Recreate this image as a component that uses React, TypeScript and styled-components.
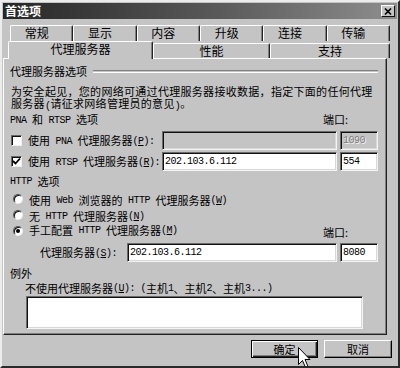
import React from 'react';
import styled, { createGlobalStyle } from 'styled-components';

const BG = '#c4c4c4';

const GlobalStyle = createGlobalStyle`
  html, body {
    margin: 0;
    padding: 0;
    background: ${BG};
  }
  body {
    font-family: "Noto Sans CJK SC", sans-serif;
    font-size: 11px;
    color: #000;
  }
`;

const Dialog = styled.div`
  position: relative;
  width: 400px;
  height: 368px;
  box-sizing: border-box;
  background: ${BG};
  border-top: 2px solid #ececec;
  border-left: 2px solid #ececec;
  border-right: 2px solid #2a2a2a;
  border-bottom: 2px solid #2a2a2a;
  padding: 1px;
  display: flex;
  flex-direction: column;
  overflow: hidden;
  font-family: "Noto Sans CJK SC", sans-serif;
  font-size: 11px;
  line-height: 1;
`;

const TitleBar = styled.div`
  height: 16px;
  display: flex;
  align-items: center;
  justify-content: space-between;
  padding: 0 2px 0 2px;
  background: linear-gradient(to right, #262626, #5a5a5a 55%, #8e8e8e);
`;

const Title = styled.span`
  color: #fff;
  font-size: 12px;
  font-weight: 700;
  line-height: 16px;
`;

const CloseButton = styled.div`
  width: 14px;
  height: 12px;
  box-sizing: border-box;
  background: ${BG};
  border-top: 1px solid #fff;
  border-left: 1px solid #fff;
  border-right: 1px solid #111;
  border-bottom: 1px solid #111;
  display: flex;
  align-items: center;
  justify-content: center;
`;

const TabStrip = styled.div`
  margin: 6px 0 0 5px;
  display: flex;
  flex-direction: column;
`;

const TabRow = styled.div<{ $indent: number }>`
  display: flex;
  align-items: flex-start;
  height: ${p => (p.$indent ? 16 : 17)}px;
  padding-left: ${p => p.$indent}px;
  width: 382px;
  box-sizing: border-box;
`;

const Tab = styled.div<{ $w?: number; $active?: boolean; $shift?: number }>`
  ${p => (p.$w ? `width: ${p.$w}px;` : 'flex: 1;')}
  box-sizing: border-box;
  height: ${p => (p.$active ? 18 : p.$shift ? 15 : 16)}px;
  margin-top: ${p => (p.$active ? 0 : p.$shift ?? 0)}px;
  padding-right: ${p => (p.$w ? 0 : 10)}px;
  background: ${BG};
  border-top: 1px solid #fff;
  border-left: 1px solid #fff;
  border-right: 1px solid #222;
  box-shadow: inset -1px 0 0 #808080;
  border-radius: 2px 2px 0 0;
  display: flex;
  justify-content: center;
  line-height: 14px;
  font-size: 12px;
  position: ${p => (p.$active ? 'relative' : 'static')};
  z-index: ${p => (p.$active ? 1 : 0)};
`;

const Panel = styled.div`
  width: 384px;
  height: 277px;
  box-sizing: border-box;
  border-top: 1px solid #fff;
  border-left: 1px solid #fff;
  border-right: 1px solid #222;
  border-bottom: 1px solid #222;
  box-shadow: inset -1px -1px 0 #808080;
  padding: 5px 8px 0 6px;
  display: flex;
  flex-direction: column;
`;

const GroupHeader = styled.div`
  height: 14px;
  display: flex;
  align-items: center;
  gap: 6px;
  line-height: 14px;
`;

const Etch = styled.div`
  flex: 1;
  height: 1px;
  border-top: 1px solid #808080;
  border-bottom: 1px solid #fff;
`;

const Description = styled.p`
  margin: 7px 0 0 1px;
  line-height: 12px;
  letter-spacing: 0.3px;
`;

const Line = styled.div<{ $top: number; $h?: number; $indent?: number }>`
  margin-top: ${p => p.$top}px;
  margin-left: ${p => p.$indent ?? 0}px;
  height: ${p => p.$h ?? 12}px;
  line-height: ${p => p.$h ?? 12}px;
  display: flex;
  align-items: ${p => (p.$h === 19 ? 'center' : 'flex-start')};
  white-space: nowrap;
`;

const Grow = styled.span`
  flex: 1;
  display: flex;
  align-items: center;
`;

const PortLabel = styled.span<{ $drop?: number }>`
  margin-right: 30px;
  margin-top: ${p => p.$drop ?? 0}px;
  line-height: 12px;
`;

const Lat = styled.span`
  font-family: "Liberation Mono", monospace;
  font-size: 10px;
  letter-spacing: -0.5px;
  white-space: pre;
  position: relative;
  top: 1px;
`;

const CheckBox = styled.span`
  width: 11px;
  height: 11px;
  box-sizing: border-box;
  margin: 0 6px 0 1px;
  background: #fff;
  border-top: 1px solid #666;
  border-left: 1px solid #666;
  border-right: 1px solid #eee;
  border-bottom: 1px solid #eee;
  box-shadow: inset 1px 1px 0 #111;
  display: inline-flex;
  align-items: center;
  justify-content: center;
`;

const Radio = styled.span<{ $on?: boolean }>`
  width: 10px;
  height: 10px;
  box-sizing: border-box;
  margin: 1px 6px 0 3px;
  border-radius: 50%;
  background: #fff;
  border: 1px solid;
  border-color: #555 #eee #eee #555;
  box-shadow: inset 1px 1px 0 #111;
  display: inline-flex;
  align-items: center;
  justify-content: center;
  &::after {
    content: '';
    width: 4px;
    height: 4px;
    border-radius: 50%;
    background: ${p => (p.$on ? '#000' : 'transparent')};
  }
`;

const Field = styled.input<{ $w: number }>`
  width: ${p => p.$w}px;
  height: 19px;
  box-sizing: border-box;
  margin: 0;
  padding: 0 2px;
  background: #fff;
  border-top: 1px solid #6a6a6a;
  border-left: 1px solid #6a6a6a;
  border-right: 1px solid #f4f4f4;
  border-bottom: 1px solid #f4f4f4;
  box-shadow: inset 1px 1px 0 #111, inset -1px -1px 0 #d8d8d8;
  font-family: "Liberation Mono", monospace;
  font-size: 10px;
  letter-spacing: -0.5px;
  color: #000;
  outline: none;
  &:disabled {
    background: ${BG};
    color: #808080;
    text-shadow: 1px 1px 0 #f0f0f0;
  }
`;

const PortGap = styled.span`
  width: 3px;
`;

const ExceptionsBox = styled.textarea`
  margin: 2px 0 0 16px;
  width: 337px;
  height: 33px;
  box-sizing: border-box;
  resize: none;
  background: #fff;
  border-top: 1px solid #6a6a6a;
  border-left: 1px solid #6a6a6a;
  border-right: 1px solid #f4f4f4;
  border-bottom: 1px solid #f4f4f4;
  box-shadow: inset 1px 1px 0 #111, inset -1px -1px 0 #d8d8d8;
  outline: none;
`;

const ButtonRow = styled.div`
  margin-top: 5px;
  display: flex;
  justify-content: flex-end;
  gap: 6px;
  padding-right: 5px;
`;

const Button = styled.button<{ $default?: boolean; $w: number }>`
  width: ${p => p.$w}px;
  height: 18px;
  box-sizing: border-box;
  margin: 0;
  padding: 0;
  background: ${BG};
  font-family: "Noto Sans CJK SC", sans-serif;
  font-size: 11px;
  line-height: 14px;
  color: #000;
  border: 1px solid;
  border-color: ${p => (p.$default ? '#000' : '#fff #000 #000 #fff')};
  box-shadow: ${p =>
    p.$default
      ? 'inset 1px 1px 0 #fff, inset -1px -1px 0 #222, inset -2px -2px 0 #808080'
      : 'inset -1px -1px 0 #808080'};
`;

const Cursor = styled.svg`
  position: absolute;
  left: 295px;
  top: 344px;
`;

const u = (c: string) => <u>{c}</u>;

export default function App() {
  return (
    <>
      <GlobalStyle />
      <Dialog>
        <TitleBar>
          <Title>首选项</Title>
          <CloseButton>
            <svg width="8" height="7" viewBox="0 0 8 7">
              <path d="M1 0.5 L7 6.5 M7 0.5 L1 6.5" stroke="#000" strokeWidth="1.6" />
            </svg>
          </CloseButton>
        </TitleBar>

        <TabStrip>
          <TabRow $indent={2}>
            {['常规', '显示', '内容', '升级', '连接', '传输'].map(t => (
              <Tab key={t}>{t}</Tab>
            ))}
          </TabRow>
          <TabRow $indent={0}>
            <Tab $w={145} $active>代理服务器</Tab>
            <Tab $w={117} $shift={2}>性能</Tab>
            <Tab $w={120} $shift={2}>支持</Tab>
          </TabRow>
        </TabStrip>

        <Panel>
          <GroupHeader>
            代理服务器选项
            <Etch />
          </GroupHeader>
          <Description>
            为安全起见，您的网络可通过代理服务器接收数据，指定下面的任何代理
            <br />
            服务器<Lat>(</Lat>请征求网络管理员的意见<Lat>)</Lat>。
          </Description>

          <Line $top={1} $h={13}>
            <Grow>
              <Lat>PNA </Lat>和<Lat> RTSP </Lat>选项
            </Grow>
            <PortLabel>端口:</PortLabel>
          </Line>

          <Line $top={5} $h={19}>
            <Grow>
              <CheckBox />
              使用<Lat> PNA </Lat>代理服务器<Lat>({u('P')}):</Lat>
            </Grow>
            <Field $w={175} disabled />
            <PortGap />
            <Field $w={38} disabled value="1090" readOnly />
          </Line>

          <Line $top={2} $h={19}>
            <Grow>
              <CheckBox>
                <svg width="9" height="9" viewBox="0 0 9 9">
                  <path d="M1 4 L3.5 6.5 L8 1.5" stroke="#000" strokeWidth="1.8" fill="none" />
                </svg>
              </CheckBox>
              使用<Lat> RTSP </Lat>代理服务器<Lat>({u('R')}):</Lat>
            </Grow>
            <Field $w={175} value="202.103.6.112" readOnly />
            <PortGap />
            <Field $w={38} value="554" readOnly />
          </Line>

          <Line $top={4}>
            <Lat>HTTP </Lat>选项
          </Line>

          <Line $top={6} $h={14}>
            <Radio />
            使用<Lat> Web </Lat>浏览器的<Lat> HTTP </Lat>代理服务器<Lat>({u('W')})</Lat>
          </Line>
          <Line $top={2} $h={14}>
            <Radio />
            无<Lat> HTTP </Lat>代理服务器<Lat>({u('N')})</Lat>
          </Line>
          <Line $top={0} $h={14}>
            <Grow>
              <Radio $on />
              手工配置<Lat> HTTP </Lat>代理服务器<Lat>({u('M')})</Lat>
            </Grow>
            <PortLabel $drop={3}>端口:</PortLabel>
          </Line>

          <Line $top={6} $h={19} $indent={30}>
            <Grow>
              代理服务器<Lat>({u('S')}):</Lat>
            </Grow>
            <Field $w={210} value="202.103.6.112" readOnly />
            <PortGap />
            <Field $w={38} value="8080" readOnly />
          </Line>

          <Line $top={5}>例外</Line>
          <Line $top={3} $indent={15}>
            不使用代理服务器<Lat>({u('U')}): (</Lat>主机<Lat>1</Lat>、主机<Lat>2</Lat>、主机
            <Lat>3...)</Lat>
          </Line>
          <ExceptionsBox readOnly />
        </Panel>

        <ButtonRow>
          <Button $default $w={67}>确定</Button>
          <Button $w={68}>取消</Button>
        </ButtonRow>

        <Cursor width="14" height="24" viewBox="0 0 14 24">
          <path
            d="M1.5 1.5 V18.5 L5.5 14.5 L8.5 21.5 L11 20.5 L8 13.5 H13 Z"
            fill="#fff"
            stroke="#000"
            strokeWidth="1"
          />
        </Cursor>
      </Dialog>
    </>
  );
}
